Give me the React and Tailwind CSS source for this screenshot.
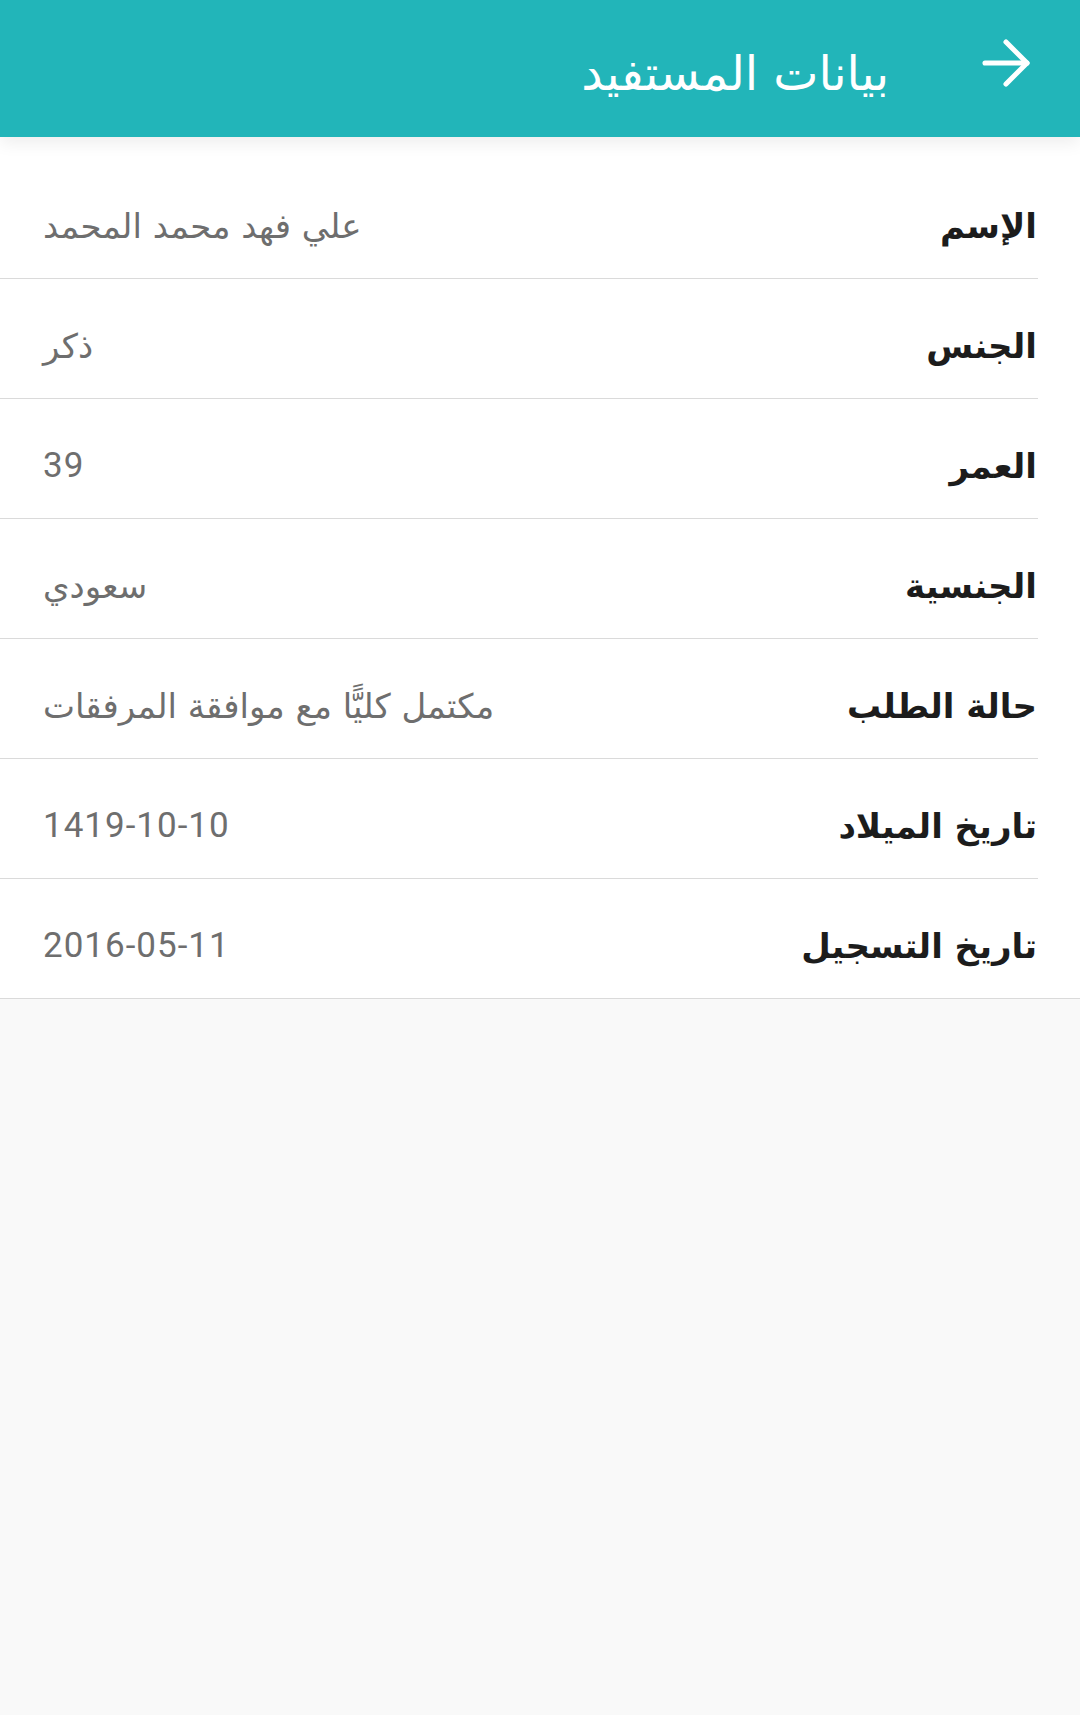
import { ArrowRight } from "lucide-react";

const rows = [
  { label: "الإسم", value: "علي فهد محمد المحمد" },
  { label: "الجنس", value: "ذكر" },
  { label: "العمر", value: "39", num: true },
  { label: "الجنسية", value: "سعودي" },
  { label: "حالة الطلب", value: "مكتمل كليًّا مع موافقة المرفقات" },
  { label: "تاريخ الميلاد", value: "1419-10-10", num: true },
  { label: "تاريخ التسجيل", value: "2016-05-11", num: true },
];

const arabic = { fontFamily: '"DejaVu Sans", "Noto Sans", sans-serif' };

const InfoRow = ({ label, value, num, last }) => (
  <div className="relative flex h-[120px] items-center justify-between pl-[43px] pr-[43px] pt-[14px]">
    <span
      className={
        num
          ? "text-[35px] tracking-[1px] text-[#6e6e6e] [font-family:Roboto,sans-serif]"
          : "text-[34px] text-[#6e6e6e]"
      }
      style={num ? undefined : arabic}
    >
      {value}
    </span>
    <span className="text-[34px] font-bold text-[#1c1c1c]" style={arabic}>
      {label}
    </span>
    <div
      className={
        last
          ? "absolute bottom-0 left-0 right-0 h-px bg-[#dadada]"
          : "absolute bottom-0 left-0 right-[42px] h-px bg-[#dadada]"
      }
    />
  </div>
);

export default function App() {
  return (
    <div className="flex min-h-[1715px] w-[1080px] flex-col bg-[#f9f9f9]">
      <header className="relative z-10 flex h-[137px] items-center justify-end bg-[#22b5b9] pr-[38px] shadow-[0_6px_16px_rgba(0,0,0,0.07)]">
        <h1
          dir="rtl"
          className="mr-[81px] mt-[9px] text-[48px] font-normal text-white"
          style={arabic}
        >
          بيانات المستفيد
        </h1>
        <ArrowRight className="-mt-[11px] h-[72px] w-[72px] text-white" strokeWidth={1.7} />
      </header>
      <main className="bg-white pt-[22px]">
        {rows.map((row, i) => (
          <InfoRow key={row.label} {...row} last={i === rows.length - 1} />
        ))}
      </main>
    </div>
  );
}
